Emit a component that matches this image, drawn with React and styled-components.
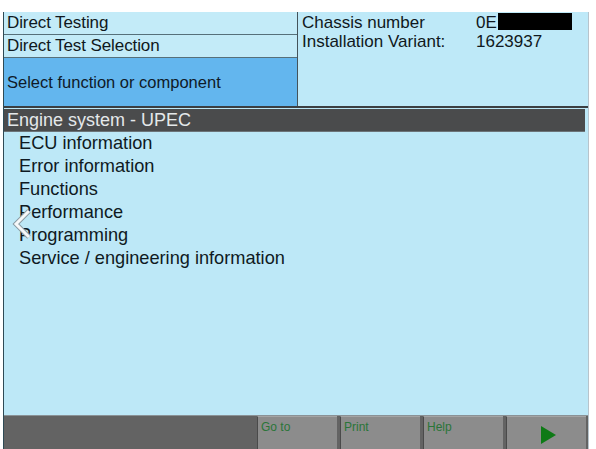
import React from "react";
import styled, { createGlobalStyle } from "styled-components";

const items = [
	"ECU information",
	"Error information",
	"Functions",
	"Performance",
	"Programming",
	"Service / engineering information",
];

const buttons = ["Go to", "Print", "Help"];

const Global = createGlobalStyle`
	html, body {
		margin: 0;
		padding: 0;
		background: #ffffff;
	}
	body {
		font-family: "Liberation Sans", Arial, sans-serif;
	}
`;

const Screen = styled.div`
	position: relative;
	margin: 12px 0 0 3px;
	width: 584px;
	height: 437px;
	display: flex;
	flex-direction: column;
	background-color: #bde8f7;
	border-left: 1px solid #2e4a55;
	border-right: 1px solid #b7c4cc;
	overflow: hidden;
`;

const Header = styled.div`
	display: flex;
	height: 94px;
	border-bottom: 2px solid #3b3f42;
`;

const LeftCol = styled.div`
	width: 293px;
	display: flex;
	flex-direction: column;
	border-right: 1px solid #44535a;
`;

const HeadRow = styled.div`
	height: 22px;
	padding-left: 3px;
	display: flex;
	align-items: center;
	font-size: 17px;
	letter-spacing: -0.1px;
	color: #101820;
	background-color: #c3ebf8;
	border-bottom: 1px solid #56707a;
`;

const Selected = styled.div`
	flex: 1;
	padding-left: 3px;
	display: flex;
	align-items: center;
	font-size: 16.5px;
	color: #0f1a28;
	background-color: #63b6ee;
`;

const InfoCol = styled.div`
	flex: 1;
	padding: 1px 0 0 4px;
	display: grid;
	grid-template-columns: 174px 1fr;
	grid-auto-rows: 19px;
	align-content: start;
	font-size: 17px;
	color: #101820;
	background-color: #bee9f8;
`;

const Redacted = styled.span`
	display: inline-block;
	width: 74px;
	height: 17px;
	margin-left: 1px;
	vertical-align: top;
	background-color: #000;
`;

const TitleBar = styled.div`
	height: 22px;
	margin-top: 1px;
	margin-right: 3px;
	padding-left: 3px;
	display: flex;
	align-items: center;
	font-size: 18px;
	color: #e4e8ea;
	background-color: #4a4b4c;
	border-bottom: 1px solid #6c7478;
`;

const List = styled.ul`
	flex: 1;
	list-style: none;
	margin: 0;
	padding: 0 0 0 15px;
	background-color: #bde8f7;
`;

const Item = styled.li`
	height: 23px;
	line-height: 22px;
	font-size: 18.2px;
	color: #0f1a22;
`;

const BottomBar = styled.div`
	height: 33px;
	display: flex;
	background-color: #636363;
	border-top: 1px solid #8a9296;
`;

const Filler = styled.div`
	width: 250px;
`;

const Button = styled.div`
	width: 80px;
	margin-left: 3px;
	padding: 3px 0 0 3px;
	box-sizing: border-box;
	font-size: 12px;
	color: #2a7538;
	background-color: #8c8c8c;
	border-left: 1px solid #4a4a4a;
	border-top: 1px solid #a4a4a4;
	display: flex;
	justify-content: ${(p) => (p.$center ? "center" : "flex-start")};
	align-items: ${(p) => (p.$center ? "center" : "flex-start")};
`;

const Chevron = styled.svg`
	position: absolute;
	left: 6px;
	top: 196px;
`;

export default function App() {
	return (
		<>
			<Global />
			<Screen>
				<Header>
					<LeftCol>
						<HeadRow>Direct Testing</HeadRow>
						<HeadRow>Direct Test Selection</HeadRow>
						<Selected>Select function or component</Selected>
					</LeftCol>
					<InfoCol>
						<span>Chassis number</span>
						<span>
							0E
							<Redacted />
						</span>
						<span>Installation Variant:</span>
						<span>1623937</span>
					</InfoCol>
				</Header>
				<TitleBar>Engine system - UPEC</TitleBar>
				<List>
					{items.map((it) => (
						<Item key={it}>{it}</Item>
					))}
				</List>
				<BottomBar>
					<Filler />
					{buttons.map((b) => (
						<Button key={b}>{b}</Button>
					))}
					<Button $center>
						<svg width="18" height="20" viewBox="0 0 18 20">
							<polygon points="2,1 17,10 2,19" fill="#0e7a16" />
						</svg>
					</Button>
				</BottomBar>
				<Chevron width="24" height="32" viewBox="0 0 24 32">
					<polyline
						points="19,3 6,16 19,29"
						fill="none"
						stroke="#8a9aa2"
						strokeWidth="5"
					/>
					<polyline
						points="19,3 6,16 19,29"
						fill="none"
						stroke="#f6f8f9"
						strokeWidth="3"
					/>
				</Chevron>
			</Screen>
		</>
	);
}
